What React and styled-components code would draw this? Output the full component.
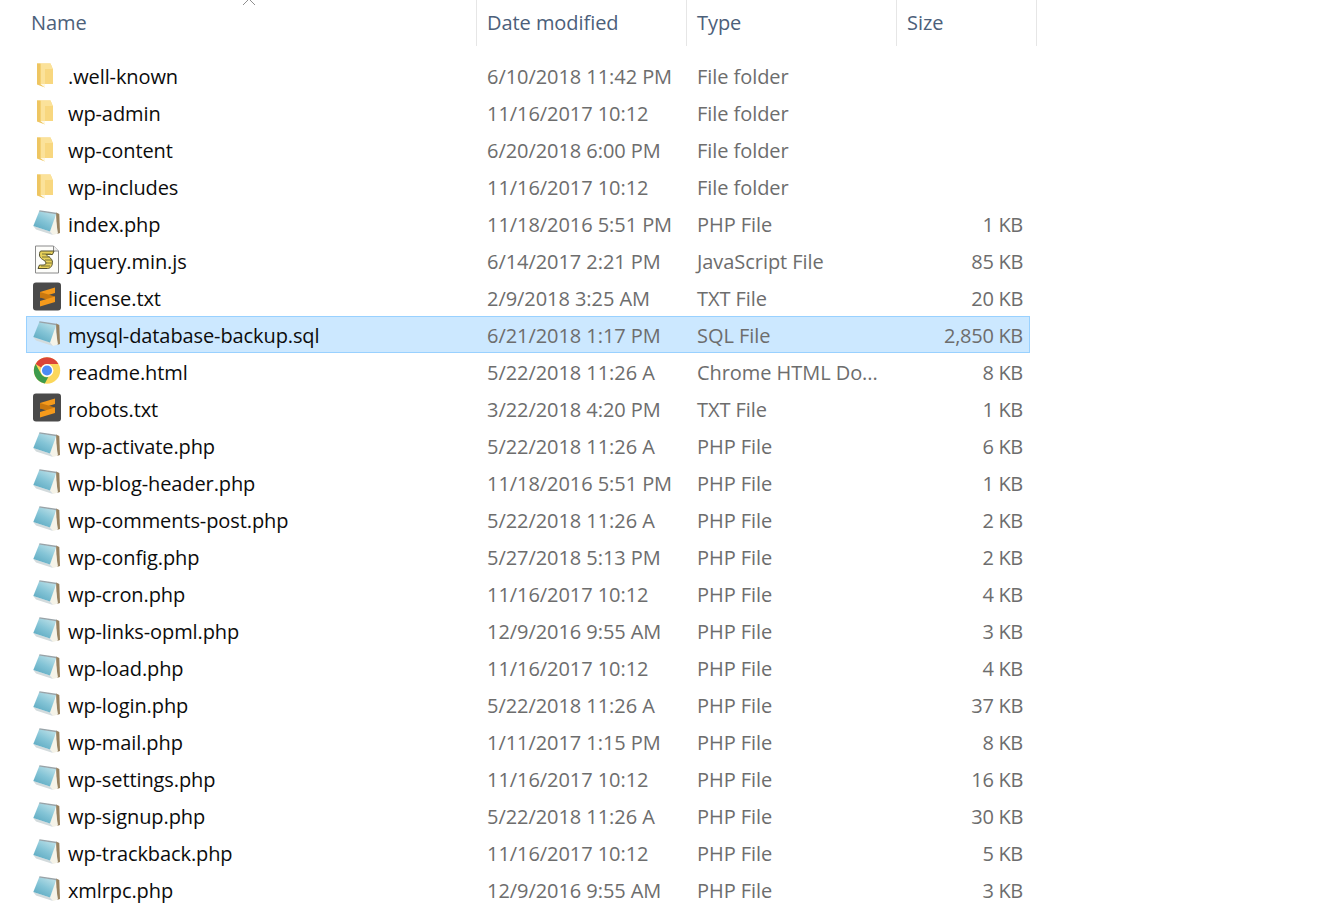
import React from "react";
import styled, { createGlobalStyle } from "styled-components";

const Global = createGlobalStyle`
  html, body { margin: 0; padding: 0; background: #fff; height: 920px; overflow: hidden; }
  body { font-family: "Open Sans", "Noto Sans", "Liberation Sans", sans-serif; }
`;
const Page = styled.div`
  position: relative;
  width: 1324px;
  height: 920px;
  overflow: hidden;
  background: #fff;
  padding-left: 26px;
  box-sizing: border-box;
`;
const SortCaret = styled.svg`
  position: absolute;
  left: 242px;
  top: -1px;
`;
const Header = styled.div`
  display: grid;
  grid-template-columns: 451px 210px 210px 140px;
  height: 46px;
  margin-bottom: 11px;
`;
const HeaderCell = styled.div`
  font-size: 20px;
  letter-spacing: -0.06px;
  color: #4c607a;
  line-height: 46px;
  padding-left: ${(p) => p.$pad}px;
  border-right: 1px solid #e6e6e6;
  box-sizing: border-box;
`;
const Row = styled.div`
  display: grid;
  grid-template-columns: 451px 210px 210px 133px;
  width: 1004px;
  height: 37px;
  box-sizing: border-box;
  align-items: center;
  border: 1px solid ${(p) => (p.$selected ? "#99d1ff" : "transparent")};
  background-color: ${(p) => (p.$selected ? "#cce8ff" : "transparent")};
  background-image: ${(p) => (p.$selected ? "radial-gradient(circle, #c4e1f8 0.5px, transparent 0.7px)" : "none")};
  background-size: 12px 10px;
`;
const NameCell = styled.div`
  display: flex;
  align-items: center;
  height: 100%;
  margin-left: -1px;
  padding-left: 7px;
  font-size: 20px;
  letter-spacing: -0.1px;
  color: #0c0c0c;
`;
const IconSlot = styled.span`
  flex: none;
  width: 28px;
  height: 28px;
  margin-right: 7px;
  display: flex;
  align-items: center;
  justify-content: center;
  transform: translateY(-2px);
  svg { overflow: visible; }
`;
const NameText = styled.span`
  padding-top: 2px;
`;
const MetaCell = styled.div`
  font-size: 20px;
  letter-spacing: -0.06px;
  color: #6d6d6d;
  white-space: nowrap;
  overflow: hidden;
  padding: 2px 0 0 10px;
  margin-left: -1px;
`;
const SizeCell = styled(MetaCell)`
  text-align: right;
  padding-left: 0;
  padding-right: 8px;
  letter-spacing: -0.3px;
`;

const FolderIcon = () => (
  <svg width="28" height="28" viewBox="0 0 28 28">
    <path d="M4 24l8 3.5V22z" fill="#fdf4d6" />
    <path d="M4 3.5h13.5L20 9.5V24H4z" fill="#f6d478" />
    <path d="M7.500 3.500h10L20 9.500V24H7.500z" fill="#fbe29a" />
    <path d="M12 9h8v15h-8z" fill="#f8d77f" />
    <path d="M4 3.500h3.500V24l4.500 3.500-8-3z" fill="#eec561" />
    <path d="M7.500 24H12v3.500z" fill="#fff8e0" />
  </svg>
);
const NotepadIcon = () => (
  <svg width="28" height="28" viewBox="0 0 28 28">
    <defs>
      <linearGradient id="pad" x1="0.8" y1="0" x2="0.2" y2="1">
        <stop offset="0" stopColor="#bfe2e9" />
        <stop offset="0.5" stopColor="#84c4d6" />
        <stop offset="1" stopColor="#5aa8c0" />
      </linearGradient>
    </defs>
    <path d="M23 4.500l3.300 1.500.7 19-3 1z" fill="#97815f" />
    <path d="M22 7l3 18.500-5 1.500-3-3.500z" fill="#f5f3e8" />
    <path d="M.3 18l16.700 5.500 3 3.500L3 21.500z" fill="#d3dbdd" />
    <path d="M6.300 3l16.900 3-6.200 17.500L.3 18z" fill="url(#pad)" />
    <path d="M6.500 2.200l17 2.600-.4 1.500L6.200 3.400z" fill="#98a3a8" />
  </svg>
);
const ScriptIcon = () => (
  <svg width="28" height="28" viewBox="0 0 28 28">
    <path d="M2.500 1h18l5 5v22h-23z" fill="#fdfdfa" stroke="#8a8a8a" />
    <path d="M20.500 1v5h5" fill="#eee" stroke="#8a8a8a" />
    <path d="M8 6h13l-1.500 3.500H13c1 2 6.500 3 6.500 8 0 3-2 6-5 6H5l1.500-3.500c3 0 6.500 .5 6.500-2 0-3-6.500-3.500-6.500-8C6.500 7.500 7 6 8 6z" fill="#e9d15a" stroke="#54502f" strokeWidth="1" />
    <path d="M9 9h9M9 12h8M12 15h7M12 18h7M8 21h9" stroke="#7a7438" strokeWidth="1" />
  </svg>
);
const SublimeIcon = () => (
  <svg width="28" height="28" viewBox="0 0 28 28">
    <rect x="0" y="0.5" width="28" height="28" rx="3" fill="#4a4a4a" />
    <path d="M22 5.500v5.500L7 15.500V10z" fill="#f59a1b" />
    <path d="M7 15.500L22 20v-5.500L7 10z" fill="#c9780f" />
    <path d="M22 14.500V20L7 24.500V19z" fill="#f59a1b" />
  </svg>
);
const ChromeIcon = () => (
  <svg width="28" height="28" viewBox="0 0 28 28">
    <g transform="translate(0 .5)">
      <circle cx="14" cy="14" r="13.200" fill="#fbd75b" />
      <path d="M14 .8a13.200 13.200 0 0 1 11.400 6.600H14a6.600 6.600 0 0 0-5.900 3.600L2.600 7.400A13.200 13.200 0 0 1 14 .8z" fill="#db4437" />
      <path d="M2.600 7.400L8 17.300a6.600 6.600 0 0 0 7.300 3.100l-3.500 6.600A13.200 13.200 0 0 1 2.600 7.400z" fill="#3d9b4c" />
      <circle cx="14" cy="14" r="6.400" fill="#fff" />
      <circle cx="14" cy="14" r="5" fill="#4c8bf5" />
    </g>
  </svg>
);

const icons = { folder: FolderIcon, php: NotepadIcon, js: ScriptIcon, txt: SublimeIcon, html: ChromeIcon };

const rows = [
  ["folder", ".well-known", "6/10/2018 11:42 PM", "File folder", ""],
  ["folder", "wp-admin", "11/16/2017 10:12", "File folder", ""],
  ["folder", "wp-content", "6/20/2018 6:00 PM", "File folder", ""],
  ["folder", "wp-includes", "11/16/2017 10:12", "File folder", ""],
  ["php", "index.php", "11/18/2016 5:51 PM", "PHP File", "1 KB"],
  ["js", "jquery.min.js", "6/14/2017 2:21 PM", "JavaScript File", "85 KB"],
  ["txt", "license.txt", "2/9/2018 3:25 AM", "TXT File", "20 KB"],
  ["php", "mysql-database-backup.sql", "6/21/2018 1:17 PM", "SQL File", "2,850 KB"],
  ["html", "readme.html", "5/22/2018 11:26 A", "Chrome HTML Do...", "8 KB"],
  ["txt", "robots.txt", "3/22/2018 4:20 PM", "TXT File", "1 KB"],
  ["php", "wp-activate.php", "5/22/2018 11:26 A", "PHP File", "6 KB"],
  ["php", "wp-blog-header.php", "11/18/2016 5:51 PM", "PHP File", "1 KB"],
  ["php", "wp-comments-post.php", "5/22/2018 11:26 A", "PHP File", "2 KB"],
  ["php", "wp-config.php", "5/27/2018 5:13 PM", "PHP File", "2 KB"],
  ["php", "wp-cron.php", "11/16/2017 10:12", "PHP File", "4 KB"],
  ["php", "wp-links-opml.php", "12/9/2016 9:55 AM", "PHP File", "3 KB"],
  ["php", "wp-load.php", "11/16/2017 10:12", "PHP File", "4 KB"],
  ["php", "wp-login.php", "5/22/2018 11:26 A", "PHP File", "37 KB"],
  ["php", "wp-mail.php", "1/11/2017 1:15 PM", "PHP File", "8 KB"],
  ["php", "wp-settings.php", "11/16/2017 10:12", "PHP File", "16 KB"],
  ["php", "wp-signup.php", "5/22/2018 11:26 A", "PHP File", "30 KB"],
  ["php", "wp-trackback.php", "11/16/2017 10:12", "PHP File", "5 KB"],
  ["php", "xmlrpc.php", "12/9/2016 9:55 AM", "PHP File", "3 KB"],
];

export default function App() {
  return (
    <Page>
      <Global />
      <SortCaret width="14" height="7" viewBox="0 0 14 7">
        <path d="M1 6l6-6 6 6" fill="none" stroke="#8f8f8f" strokeWidth="1" />
      </SortCaret>
      <Header>
        <HeaderCell $pad={5}>Name</HeaderCell>
        <HeaderCell $pad={10}>Date modified</HeaderCell>
        <HeaderCell $pad={10}>Type</HeaderCell>
        <HeaderCell $pad={10}>Size</HeaderCell>
      </Header>
      {rows.map(([kind, name, date, type, size]) => {
        const Icon = icons[kind];
        return (
          <Row key={name} $selected={name.startsWith("mysql")}>
            <NameCell>
              <IconSlot><Icon /></IconSlot>
              <NameText>{name}</NameText>
            </NameCell>
            <MetaCell>{date}</MetaCell>
            <MetaCell>{type}</MetaCell>
            <SizeCell>{size}</SizeCell>
          </Row>
        );
      })}
    </Page>
  );
}
